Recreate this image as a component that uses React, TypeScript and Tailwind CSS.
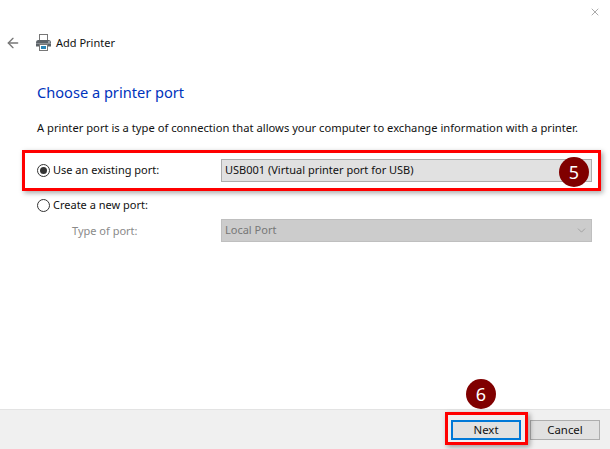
import { ArrowLeft, ChevronDown, X } from "lucide-react";

const font = { fontFamily: '"Noto Sans", "Open Sans", sans-serif' };

function Radio({ checked }: { checked?: boolean }) {
  return (
    <span className="flex h-[13px] w-[13px] shrink-0 items-center justify-center rounded-full border border-[#333]">
      {checked && <span className="h-[7px] w-[7px] rounded-full bg-[#333]" />}
    </span>
  );
}

function PrinterIcon() {
  return (
    <svg width="17" height="17" viewBox="0 0 17 17" className="shrink-0">
      <rect x="4.5" y="0.5" width="8" height="6" fill="#fff" stroke="#777" />
      <path d="M1 8.5 Q1 6 3 6 H14 Q16 6 16 8.5 V12.5 H1 Z" fill="#5c6268" />
      <rect x="1" y="9" width="15" height="1" fill="#8b9095" />
      <rect x="13" y="7.5" width="2" height="1" fill="#d8dcdf" />
      <rect x="4.5" y="10.5" width="8" height="6" fill="#fff" stroke="#777" />
      <rect x="6" y="12" width="5" height="3" fill="#2b84b5" />
    </svg>
  );
}

function Badge({ n, className }: { n: number; className: string }) {
  return (
    <div className={`absolute flex h-[30px] w-[30px] items-center justify-center rounded-full bg-[#800000] text-[18px] text-white ${className}`}>
      {n}
    </div>
  );
}

export default function App() {
  return (
    <div className="relative flex h-[449px] w-[610px] flex-col overflow-hidden bg-white text-[11px] text-black" style={font}>
      <div className="flex h-[24px] justify-end pr-[9px] pt-[6px]">
        <X className="h-[12px] w-[12px] text-[#777]" strokeWidth={1.25} />
      </div>

      <div className="mt-[10px] flex h-[17px] items-center">
        <ArrowLeft className="ml-[5px] h-[16px] w-[16px] text-[#777]" strokeWidth={2} />
        <span className="ml-[14px]"><PrinterIcon /></span>
        <span className="ml-[4px] pt-[1px] text-[#111]">Add Printer</span>
      </div>

      <h1 className="ml-[37px] mt-[31px] text-[14.6px] font-normal leading-[20px] text-[#0033bc]">Choose a printer port</h1>

      <p className="ml-[37px] mt-[18px] whitespace-nowrap text-[11.2px] leading-[16px] text-[#111]">
        A printer port is a type of connection that allows your computer to exchange information with a printer.
      </p>

      <div className="ml-[22px] mt-[14px] flex h-[41px] w-[579px] items-center border-[3px] border-[#ff0000] pl-[12px] pr-[6px] shadow-[2px_2px_5px_rgba(0,0,0,0.35)]">
        <Radio checked />
        <span className="ml-[3px] text-[#111]">Use an existing port:</span>
        <div className="ml-auto flex h-[23px] w-[371px] items-center border border-[#adadad] bg-[#e1e1e1] pl-[3px] text-[#111]">
          USB001 (Virtual printer port for USB)
        </div>
      </div>

      <div className="ml-[37px] mt-[6px] flex h-[16px] items-center">
        <Radio />
        <span className="ml-[3px] text-[#111]">Create a new port:</span>
      </div>

      <div className="ml-[72px] mt-[6px] flex h-[23px] w-[520px] items-center">
        <span className="pt-[2px] text-[#8a8a8a]">Type of port:</span>
        <div className="ml-auto flex h-[23px] w-[371px] items-center justify-between border border-[#bfbfbf] bg-[#cccccc] pl-[3px] pr-[3px] text-[#777]">
          Local Port
          <ChevronDown className="h-[13px] w-[13px] text-[#999]" strokeWidth={1.5} />
        </div>
      </div>

      <div className="mt-auto flex h-[40px] items-start justify-end gap-[9px] border-t border-[#e3e3e3] bg-[#f0f0f0] pr-[10px] pt-[10px]">
        <button className="h-[20px] w-[70px] border-2 border-[#0078d7] bg-[#e1e1e1] text-[11.4px] leading-[16px] text-[#111]">Next</button>
        <button className="h-[20px] w-[70px] border border-[#adadad] bg-[#e1e1e1] text-[11.4px] leading-[18px] text-[#111]">Cancel</button>
      </div>

      <div className="absolute left-[445px] top-[412px] h-[33px] w-[83px] border-[3px] border-[#ff0000] shadow-[2px_2px_5px_rgba(0,0,0,0.35)]" />
      <Badge n={5} className="left-[559px] top-[157px]" />
      <Badge n={6} className="left-[466px] top-[379px]" />
    </div>
  );
}
